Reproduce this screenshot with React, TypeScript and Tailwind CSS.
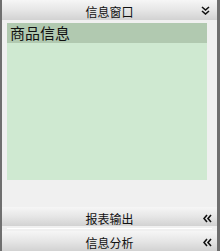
import React from 'react'

function DoubleChevron({ dir }: { dir: 'down' | 'left' }) {
  return (
    <svg
      width="9"
      height="9"
      viewBox="0 0 9 9"
      className={dir === 'left' ? 'rotate-90' : ''}
      fill="none"
      stroke="#111"
      strokeWidth="1.6"
    >
      <path d="M1 1 L4.5 4 L8 1" />
      <path d="M1 5 L4.5 8 L8 5" />
    </svg>
  )
}

function Bar({ title, icon }: { title: string; icon: 'down' | 'left' }) {
  return (
    <div className="relative flex h-[20px] items-center justify-center bg-gradient-to-b from-[#f6f6f6] via-[#e6e6e6] to-[#d2d2d2] text-[12px] text-[#111]">
      <span className="translate-y-[2px]">{title}</span>
      <span
        className={
          icon === 'down'
            ? 'absolute right-[7px] top-[6px] flex'
            : 'absolute right-[5px] top-[7px] flex'
        }
      >
        <DoubleChevron dir={icon} />
      </span>
    </div>
  )
}

export default function App() {
  return (
    <div
      className="flex h-[251px] w-[220px] flex-col border-l-2 border-r-[3px] border-[#6f6f6f] bg-[#f0f0f0]"
      style={{ fontFamily: '"Noto Sans CJK SC", "DejaVu Sans", sans-serif' }}
    >
      <div className="h-[21px]">
        <Bar title="信息窗口" icon="down" />
      </div>
      <div className="flex h-[189px] flex-col pl-[5px] pr-[10px] pt-[2px]">
        <div className="flex h-[157px] flex-col bg-[#cfe9d1]">
          <div className="flex h-[20px] items-center bg-[#b1c9b0] pl-[3px] text-[15px] leading-none text-[#111]">
            商品信息
          </div>
        </div>
      </div>
      <Bar title="报表输出" icon="left" />
      <div className="flex h-[5px] items-center px-[5px]">
        <div className="h-px w-full bg-white" />
      </div>
      <Bar title="信息分析" icon="left" />
    </div>
  )
}
